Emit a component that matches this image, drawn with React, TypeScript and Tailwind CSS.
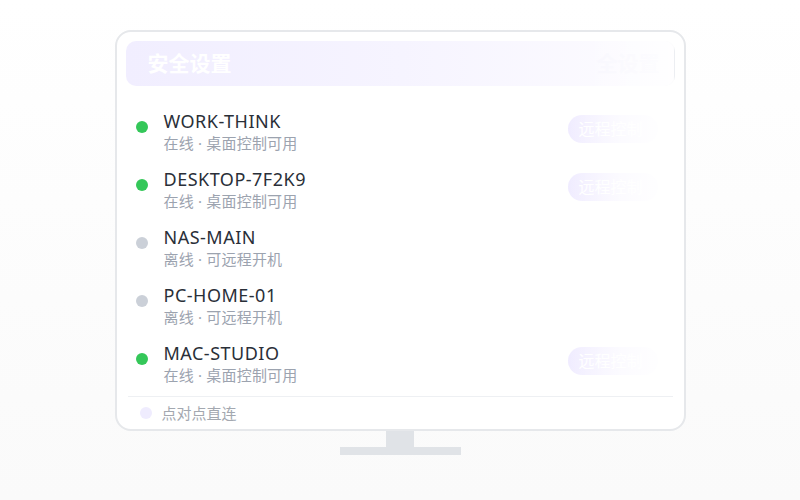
import React from 'react';

type Device = {
  name: string;
  online: boolean;
};

const devices: Device[] = [
  { name: 'WORK-THINK', online: true },
  { name: 'DESKTOP-7F2K9', online: true },
  { name: 'NAS-MAIN', online: false },
  { name: 'PC-HOME-01', online: false },
  { name: 'MAC-STUDIO', online: true },
];

const font = "font-['Noto_Sans','Noto_Sans_CJK_SC',sans-serif]";

function DeviceRow({ device }: { device: Device }) {
  return (
    <div className="flex items-start h-[45px] shrink-0 pl-[19px] pr-[26px]">
      <span
        className={`mt-[12px] w-[12px] h-[12px] rounded-full shrink-0 ${
          device.online ? 'bg-[#34c759]' : 'bg-[#cbd0d8]'
        }`}
      />
      <div className="ml-[16px] flex flex-col">
        <span className="text-[18px] leading-[24px] text-[#2a2f38] tracking-[0.5px]">{device.name}</span>
        <span className="text-[15px] leading-[21px] text-[#9ca3af] tracking-[0.2px]">
          {device.online ? '在线 · 桌面控制可用' : '离线 · 可远程开机'}
        </span>
      </div>
      {device.online && (
        <span className="ml-auto mt-[6px] h-[28px] w-[90px] rounded-full bg-gradient-to-r from-[#efebff] to-[#f8f6ff] text-white text-[16px] leading-[28px] pl-[11px]">
          远程控制
        </span>
      )}
    </div>
  );
}

export default function App() {
  return (
    <div className={`w-[800px] h-[500px] bg-gradient-to-b from-white to-[#fafafa] pt-[30px] ${font}`}>
      <div className="relative mx-auto w-[571px] h-[401px] rounded-[16px] border-2 border-[#e6e8eb] bg-white flex flex-col px-[9px] pt-[9px] overflow-hidden">
        <div className="shrink-0 flex items-center h-[45px] rounded-[10px] bg-gradient-to-r from-[#f1eeff] via-[#f6f4ff] to-[#fdfcff] border-r border-[#eceef2] pl-[22px] pr-[14px]">
          <span className="text-[21px] font-bold text-white">安全设置</span>
          <span className="ml-auto text-[21px] font-bold text-[#f8f7fe]">全设置</span>
        </div>

        <div className="shrink-0 mt-[23px] -mx-[9px] flex flex-col gap-[13px]">
          {devices.map((d) => (
            <DeviceRow key={d.name} device={d} />
          ))}
        </div>

        <div className="shrink-0 mt-[10px] mx-[2px] border-t border-[#eef0f3] flex items-center h-[33px] pl-[12px]">
          <span className="w-[12px] h-[12px] rounded-full bg-[#efecfe]" />
          <span className="ml-[10px] text-[15px] text-[#a3a8b0]">点对点直连</span>
        </div>

        {/* right edge fade over the list */}
        <div className="absolute right-[9px] top-[60px] w-[110px] h-[290px] bg-gradient-to-r from-white/0 via-white/70 to-white" />
        <div className="absolute right-[10px] top-[9px] w-[90px] h-[45px] bg-gradient-to-r from-white/0 to-white/80" />
      </div>

      {/* stand */}
      <div className="mx-auto w-[28px] h-[16px] bg-[#e0e3e7]" />
      <div className="mx-auto w-[121px] h-[8px] bg-[#e0e3e7]" />
    </div>
  );
}
